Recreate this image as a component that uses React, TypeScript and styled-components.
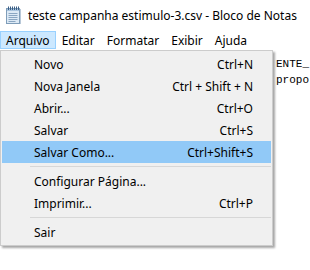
import styled, { createGlobalStyle } from "styled-components";

const GlobalStyle = createGlobalStyle`
  html, body {
    margin: 0;
    padding: 0;
    background: #ffffff;
  }
  body {
    width: 310px;
    height: 270px;
    overflow: hidden;
    font-family: "Noto Sans", "Open Sans", sans-serif;
    font-size: 12px;
    color: #000;
  }
`;

type Entry =
  | { kind: "item"; label: string; shortcut?: string; active?: boolean }
  | { kind: "separator" };

const fileMenu: Entry[] = [
  { kind: "item", label: "Novo", shortcut: "Ctrl+N" },
  { kind: "item", label: "Nova Janela", shortcut: "Ctrl + Shift + N" },
  { kind: "item", label: "Abrir...", shortcut: "Ctrl+O" },
  { kind: "item", label: "Salvar", shortcut: "Ctrl+S" },
  { kind: "item", label: "Salvar Como...", shortcut: "Ctrl+Shift+S", active: true },
  { kind: "separator" },
  { kind: "item", label: "Configurar Página..." },
  { kind: "item", label: "Imprimir...", shortcut: "Ctrl+P" },
  { kind: "separator" },
  { kind: "item", label: "Sair" },
];

const topMenus = ["Arquivo", "Editar", "Formatar", "Exibir", "Ajuda"];

function NotepadIcon() {
  return (
    <svg width="17" height="19" viewBox="0 0 17 19">
      <rect x="1.5" y="2.5" width="13" height="15" fill="#dce9f5" stroke="#7f9db9" />
      <rect x="2" y="3" width="12" height="2" fill="#a9c4de" />
      <line x1="3.5" y1="7.5" x2="12.5" y2="7.5" stroke="#8aa6c2" />
      <line x1="3.5" y1="9.5" x2="12.5" y2="9.5" stroke="#8aa6c2" />
      <line x1="3.5" y1="11.5" x2="12.5" y2="11.5" stroke="#8aa6c2" />
      <line x1="3.5" y1="13.5" x2="12.5" y2="13.5" stroke="#8aa6c2" />
      <line x1="3.5" y1="15.5" x2="10.5" y2="15.5" stroke="#8aa6c2" />
      {[3, 5, 7, 9, 11, 13].map((x) => (
        <line key={x} x1={x + 0.5} y1="0.5" x2={x + 0.5} y2="4" stroke="#3b5f86" />
      ))}
      <line x1="15.5" y1="3" x2="15.5" y2="18" stroke="#b8c8d8" />
    </svg>
  );
}

export default function App() {
  return (
    <>
      <GlobalStyle />
      <Window>
        <TitleBar>
          <NotepadIcon />
          <Title>teste campanha estimulo-3.csv - Bloco de Notas</Title>
        </TitleBar>
        <MenuBar>
          {topMenus.map((m, i) => (
            <TopMenu key={m} open={i === 0}>
              {m}
            </TopMenu>
          ))}
        </MenuBar>
        <Editor>
          <EditorText>{"ENTE_\npropo"}</EditorText>
          <Popup>
            {fileMenu.map((entry, i) =>
              entry.kind === "separator" ? (
                <Separator key={i} />
              ) : (
                <MenuItem key={i} active={!!entry.active}>
                  <span>{entry.label}</span>
                  <span>{entry.shortcut}</span>
                </MenuItem>
              )
            )}
          </Popup>
        </Editor>
      </Window>
    </>
  );
}

const Window = styled.div`
  width: 310px;
  height: 270px;
  display: flex;
  flex-direction: column;
  background: #fff;
`;

const TitleBar = styled.div`
  height: 31px;
  display: flex;
  align-items: center;
  gap: 6px;
  padding-left: 5px;
  box-sizing: border-box;
`;

const Title = styled.span`
  font-size: 12px;
  white-space: nowrap;
  margin-top: -1px;
`;

const MenuBar = styled.div`
  height: 19px;
  display: flex;
  align-items: stretch;
`;

const TopMenu = styled.div<{ open: boolean }>`
  display: flex;
  align-items: center;
  padding: 0 5px;
  box-sizing: border-box;
  border: 1px solid ${(p) => (p.open ? "#99d1ff" : "transparent")};
  background: ${(p) => (p.open ? "#cce8ff" : "transparent")};
  height: 18px;
`;

const Editor = styled.div`
  flex: 1;
  position: relative;
  overflow: hidden;
`;

const EditorText = styled.pre`
  margin: 0;
  padding: 6px 0 0 276px;
  font-family: "Liberation Mono", monospace;
  font-size: 11px;
  line-height: 16px;
  white-space: pre;
`;

const Popup = styled.div`
  position: absolute;
  left: 0;
  top: 0;
  width: 273px;
  box-sizing: border-box;
  padding: 2px 1px;
  background: #f0f0f0;
  border: 1px solid #cccccc;
  box-shadow: 2px 2px 2px rgba(0, 0, 0, 0.35);
`;

const MenuItem = styled.div<{ active: boolean }>`
  height: 22px;
  display: flex;
  align-items: center;
  justify-content: space-between;
  padding: 0 18px 0 32px;
  background: ${(p) => (p.active ? "#91c9f7" : "transparent")};
  white-space: nowrap;
`;

const Separator = styled.div`
  height: 7px;
  display: flex;
  align-items: center;
  padding-left: 28px;

  &::after {
    content: "";
    flex: 1;
    height: 1px;
    background: #d7d7d7;
  }
`;
